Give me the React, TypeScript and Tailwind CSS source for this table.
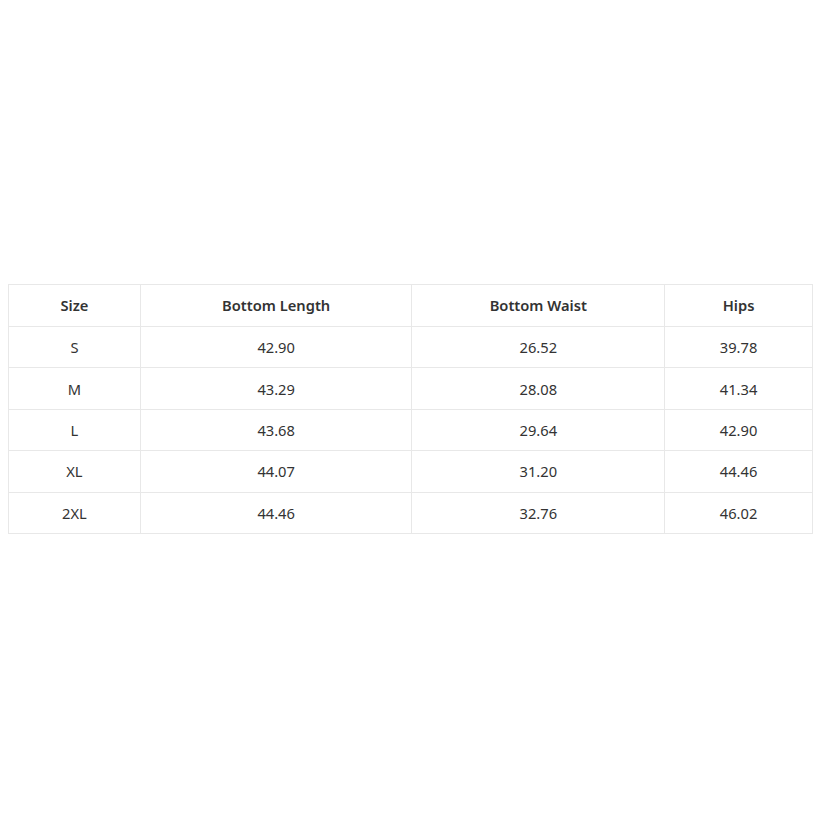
const rows = [
  { size: "S", length: "42.90", waist: "26.52", hips: "39.78" },
  { size: "M", length: "43.29", waist: "28.08", hips: "41.34" },
  { size: "L", length: "43.68", waist: "29.64", hips: "42.90" },
  { size: "XL", length: "44.07", waist: "31.20", hips: "44.46" },
  { size: "2XL", length: "44.46", waist: "32.76", hips: "46.02" },
];

const App = () => {
  return (
    <div className="min-h-[823px] bg-white pl-2 pr-[10px] pt-[284px] font-['Noto_Sans','Open_Sans',sans-serif] text-[#333]">
      <table className="w-full border-collapse text-center text-[14.7px]">
        <colgroup>
          <col className="w-[132px]" />
          <col className="w-[272px]" />
          <col className="w-[253px]" />
          <col className="w-[148px]" />
        </colgroup>
        <thead>
          <tr className="h-[42px]">
            <th className="border border-[#e8e8e8] font-semibold">Size</th>
            <th className="border border-[#e8e8e8] font-semibold">Bottom Length</th>
            <th className="border border-[#e8e8e8] font-semibold">Bottom Waist</th>
            <th className="border border-[#e8e8e8] font-semibold">Hips</th>
          </tr>
        </thead>
        <tbody>
          {rows.map((r) => (
            <tr key={r.size} className="h-[41.4px]">
              <td className="border border-[#e8e8e8]">{r.size}</td>
              <td className="border border-[#e8e8e8]">{r.length}</td>
              <td className="border border-[#e8e8e8]">{r.waist}</td>
              <td className="border border-[#e8e8e8]">{r.hips}</td>
            </tr>
          ))}
        </tbody>
      </table>
    </div>
  );
};

export default App;
